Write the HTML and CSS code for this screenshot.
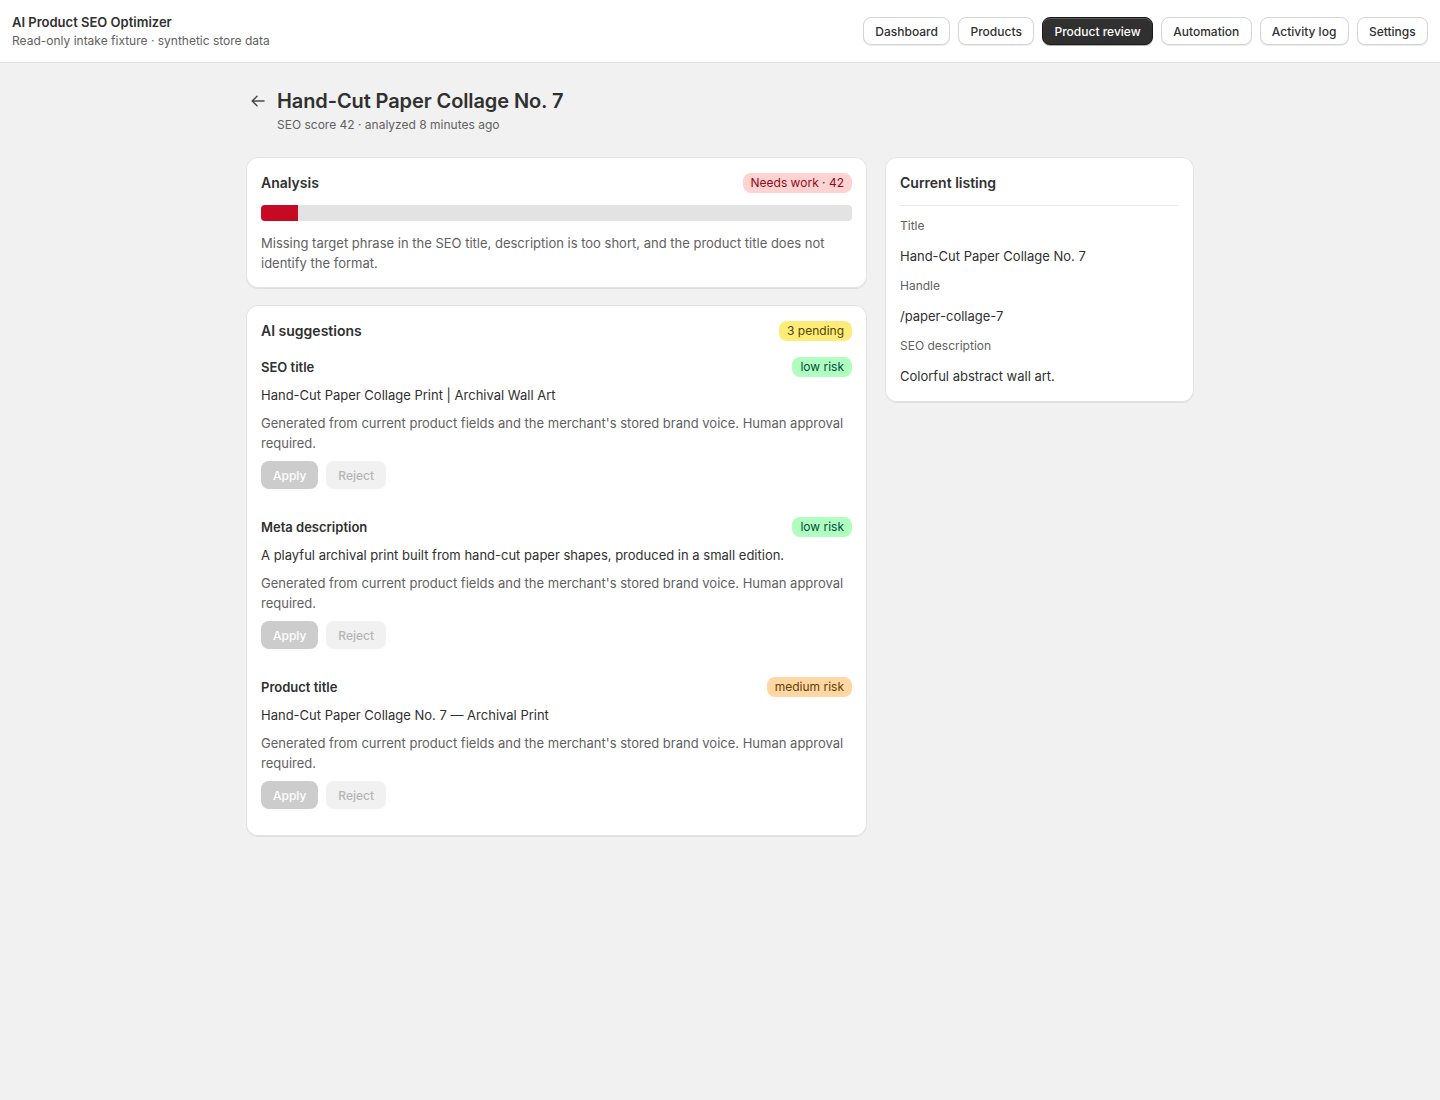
FILE: index.html
```html
<!DOCTYPE html>
<html lang="en">
<head>
<meta charset="utf-8">
<title>AI Product SEO Optimizer</title>
<link rel="stylesheet" href="styles.css">
</head>
<body>
<header class="topbar">
  <div class="brand">
    <div class="brand-title">AI Product SEO Optimizer</div>
    <div class="brand-sub">Read-only intake fixture · synthetic store data</div>
  </div>
  <nav class="nav">
    <button class="nav-btn">Dashboard</button>
    <button class="nav-btn">Products</button>
    <button class="nav-btn nav-btn-active">Product review</button>
    <button class="nav-btn">Automation</button>
    <button class="nav-btn">Activity log</button>
    <button class="nav-btn">Settings</button>
  </nav>
</header>

<main class="page">
  <div class="page-head">
    <button class="back" aria-label="Back">
      <svg viewBox="0 0 20 20" width="20" height="20"><path d="M16 10H4.5M9 5.2 4.2 10 9 14.8" fill="none" stroke="#4a4a4a" stroke-width="1.5" stroke-linecap="round" stroke-linejoin="round"/></svg>
    </button>
    <div class="page-titles">
      <h1 class="page-title">Hand-Cut Paper Collage No. 7</h1>
      <div class="page-sub">SEO score 42 · analyzed 8 minutes ago</div>
    </div>
  </div>

  <div class="layout">
    <div class="col-main">
      <section class="card card-main">
        <div class="card-head">
          <h2 class="card-title">Analysis</h2>
          <span class="badge badge-critical">Needs work · 42</span>
        </div>
        <div class="progress"><div class="progress-fill" style="width:6.3%"></div></div>
        <p class="muted">Missing target phrase in the SEO title, description is too short, and the product title does not identify the format.</p>
      </section>

      <section class="card card-main">
        <div class="card-head">
          <h2 class="card-title">AI suggestions</h2>
          <span class="badge badge-attention">3 pending</span>
        </div>
        <div class="suggestions">
          <div class="suggestion">
            <div class="sug-head">
              <h3 class="sug-title">SEO title</h3>
              <span class="badge badge-success">low risk</span>
            </div>
            <p class="sug-text">Hand-Cut Paper Collage Print | Archival Wall Art</p>
            <p class="muted">Generated from current product fields and the merchant's stored brand voice. Human approval required.</p>
            <div class="actions">
              <button class="btn btn-apply" disabled>Apply</button>
              <button class="btn btn-reject" disabled>Reject</button>
            </div>
          </div>
          <div class="suggestion">
            <div class="sug-head">
              <h3 class="sug-title">Meta description</h3>
              <span class="badge badge-success">low risk</span>
            </div>
            <p class="sug-text">A playful archival print built from hand-cut paper shapes, produced in a small edition.</p>
            <p class="muted">Generated from current product fields and the merchant's stored brand voice. Human approval required.</p>
            <div class="actions">
              <button class="btn btn-apply" disabled>Apply</button>
              <button class="btn btn-reject" disabled>Reject</button>
            </div>
          </div>
          <div class="suggestion">
            <div class="sug-head">
              <h3 class="sug-title">Product title</h3>
              <span class="badge badge-warning">medium risk</span>
            </div>
            <p class="sug-text">Hand-Cut Paper Collage No. 7 — Archival Print</p>
            <p class="muted">Generated from current product fields and the merchant's stored brand voice. Human approval required.</p>
            <div class="actions">
              <button class="btn btn-apply" disabled>Apply</button>
              <button class="btn btn-reject" disabled>Reject</button>
            </div>
          </div>
        </div>
      </section>
    </div>

    <aside class="col-side">
      <section class="card">
        <div class="card-head card-head-divided">
          <h2 class="card-title">Current listing</h2>
        </div>
        <dl class="listing">
          <dt>Title</dt>
          <dd>Hand-Cut Paper Collage No. 7</dd>
          <dt>Handle</dt>
          <dd>/paper-collage-7</dd>
          <dt>SEO description</dt>
          <dd>Colorful abstract wall art.</dd>
        </dl>
      </section>
    </aside>
  </div>
</main>
</body>
</html>
```

FILE: styles.css
```css
* { box-sizing: border-box; }

html, body {
  margin: 0;
  padding: 0;
}

body {
  background: #f1f1f1;
  color: #303030;
  font-family: Inter, "Noto Sans", "Liberation Sans", sans-serif;
  font-size: 13px;
  line-height: 20px;
  min-height: 1100px;
}

h1, h2, h3, p, dl, dd { margin: 0; }

button { font-family: inherit; }

/* Top bar */
.topbar {
  display: flex;
  justify-content: space-between;
  align-items: flex-start;
  background: #ffffff;
  border-bottom: 1px solid #e3e3e3;
  padding: 12px;
  height: 63px;
}

.brand-title {
  font-size: 13px;
  font-weight: 600;
  line-height: 20px;
  color: #303030;
}

.brand-sub {
  font-size: 12px;
  line-height: 16px;
  margin-top: 1px;
  color: #616161;
}

.nav {
  display: flex;
  gap: 8px;
  align-self: center;
}

.nav-btn {
  height: 28px;
  padding: 0 11.3px;
  border: 1px solid #d4d4d4;
  border-radius: 8px;
  background: #ffffff;
  color: #303030;
  font-size: 12px;
  font-weight: 500;
  box-shadow: 0 1px 0 rgba(0, 0, 0, 0.08);
  cursor: pointer;
}

.nav-btn-active {
  background: #303030;
  border-color: #1a1a1a;
  color: #ffffff;
  box-shadow: inset 0 1px 0 rgba(255, 255, 255, 0.2), 0 1px 0 rgba(0, 0, 0, 0.3);
}

/* Page */
.page {
  width: 948px;
  margin: 0 auto;
  padding-top: 24px;
}

.page-head {
  display: flex;
  align-items: flex-start;
  gap: 5px;
  margin-bottom: 24px;
}

.back {
  width: 28px;
  height: 28px;
  margin-left: -2px;
  padding: 0;
  border: 0;
  background: transparent;
  display: flex;
  align-items: center;
  justify-content: center;
  cursor: pointer;
}

.page-title {
  font-size: 20px;
  font-weight: 600;
  line-height: 28px;
  color: #303030;
  letter-spacing: -0.1px;
}

.page-sub {
  font-size: 12px;
  line-height: 16px;
  margin-top: 2px;
  color: #616161;
}

.layout {
  display: grid;
  grid-template-columns: 621fr 309fr;
  gap: 18px;
  align-items: start;
}

.col-main {
  display: flex;
  flex-direction: column;
  gap: 17px;
}

.card {
  background: #ffffff;
  border-radius: 12px;
  box-shadow: inset 0 0 0 1px #e3e3e3, 0 1px 0 rgba(0, 0, 0, 0.08);
  padding: 16px 15px;
}

.card-main {
  padding-bottom: 15px;
}

.card-head {
  display: flex;
  justify-content: space-between;
  align-items: center;
  min-height: 20px;
}

.card-head-divided {
  padding-bottom: 12px;
  border-bottom: 1px solid #ebebeb;
  margin-bottom: 12px;
}

.card-title {
  font-size: 14px;
  font-weight: 600;
  line-height: 20px;
  color: #303030;
}

.badge {
  display: inline-block;
  font-size: 12px;
  line-height: 20px;
  padding: 0 8px;
  border-radius: 8px;
}

.badge-critical { background: #fed3d1; color: #8e0b21; }
.badge-attention { background: #ffeb78; color: #4f4700; }
.badge-success { background: #affebf; color: #014b40; }
.badge-warning { background: #ffd6a4; color: #5e4200; }

.progress {
  height: 16px;
  background: #e3e3e3;
  border-radius: 4px;
  overflow: hidden;
  margin: 12px 0 12px;
}

.progress-fill {
  height: 100%;
  background: #c70a24;
}

.muted {
  color: #616161;
  font-size: 13px;
  line-height: 20px;
}

/* Suggestions */
.suggestions {
  display: flex;
  flex-direction: column;
  gap: 16px;
  margin-top: 16px;
}

.suggestion {
  display: flex;
  flex-direction: column;
  gap: 8px;
  padding-bottom: 12px;
}

.sug-head {
  display: flex;
  justify-content: space-between;
  align-items: center;
}

.sug-title {
  font-size: 13px;
  font-weight: 600;
  line-height: 20px;
  color: #303030;
}

.sug-text {
  color: #303030;
}

.actions {
  display: flex;
  gap: 8px;
}

.btn {
  height: 28px;
  padding: 0 12px;
  border: 0;
  border-radius: 8px;
  font-size: 12px;
  font-weight: 500;
}

.btn-apply {
  background: #cccccc;
  color: #ffffff;
}

.btn-reject {
  background: #f1f1f1;
  color: #b5b5b5;
}

/* Listing */
.listing dt {
  font-size: 12px;
  line-height: 16px;
  color: #616161;
  margin-bottom: 12px;
}

.listing dd {
  font-size: 13px;
  line-height: 20px;
  color: #303030;
  margin-bottom: 12px;
}

.listing dd:last-child {
  margin-bottom: 0;
}
```
